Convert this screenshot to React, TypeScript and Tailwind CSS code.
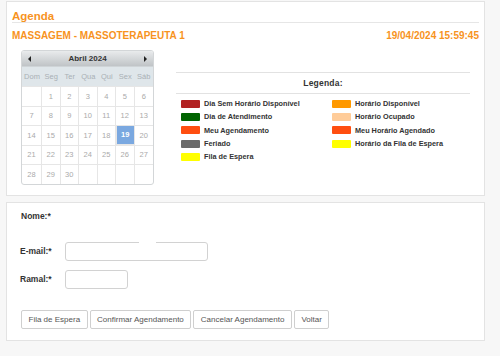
import React from "react";

const font = { fontFamily: '"Liberation Sans", Arial, sans-serif' };

const days = ["Dom", "Seg", "Ter", "Qua", "Qui", "Sex", "Sáb"];
const weeks: (number | null)[][] = [
  [null, 1, 2, 3, 4, 5, 6],
  [7, 8, 9, 10, 11, 12, 13],
  [14, 15, 16, 17, 18, 19, 20],
  [21, 22, 23, 24, 25, 26, 27],
  [28, 29, 30, null, null, null, null],
];
const rowH = ["h-[20px]", "h-[19px]", "h-[20px]", "h-[19px]", "h-[20px]"];

const legendLeft = [
  { c: "bg-[#b22222]", t: "Dia Sem Horário Disponível" },
  { c: "bg-[#006400]", t: "Dia de Atendimento" },
  { c: "bg-[#ff4e10]", t: "Meu Agendamento" },
  { c: "bg-[#6a6a6a]", t: "Feriado" },
  { c: "bg-[#ffff00]", t: "Fila de Espera" },
];
const legendRight = [
  { c: "bg-[#ff9900]", t: "Horário Disponível" },
  { c: "bg-[#ffcc99]", t: "Horário Ocupado" },
  { c: "bg-[#ff4e10]", t: "Meu Horário Agendado" },
  { c: "bg-[#ffff00]", t: "Horário da Fila de Espera" },
];

function Calendar() {
  return (
    <div className="w-[133px] border border-[#d3d6d8] rounded-[3px] overflow-hidden bg-white">
      <div className="h-[15px] flex items-center justify-between px-[6px] bg-gradient-to-b from-[#e9ebec] to-[#c0c4c7]">
        <span className="w-0 h-0 border-y-[3px] border-y-transparent border-r-[3px] border-r-[#222]" />
        <span className="text-[8px] font-bold text-[#333] leading-none">Abril 2024</span>
        <span className="w-0 h-0 border-y-[3px] border-y-transparent border-l-[3px] border-l-[#222]" />
      </div>
      <div className="grid grid-cols-[20px_repeat(6,1fr)] h-[20px] bg-[#dfe6ea] border-t border-[#cfd4d7]">
        {days.map((d) => (
          <div key={d} className="flex items-center justify-center text-[7.5px] text-[#a9b0b5]">
            {d}
          </div>
        ))}
      </div>
      {weeks.map((w, i) => (
        <div key={i} className={`grid grid-cols-[20px_repeat(6,1fr)] ${rowH[i]}`}>
          {w.map((d, j) => (
            <div
              key={j}
              className={`flex items-center justify-center text-[7.5px] border-t border-[#e6e6e6] ${
                j < 6 ? "border-r" : ""
              } ${d === 19 ? "bg-[#7aa8e0] text-white font-bold border border-[#5b8fcf]" : "text-[#aaaaaa]"}`}
            >
              {d ?? ""}
            </div>
          ))}
        </div>
      ))}
    </div>
  );
}

function LegendItem({ c, t }: { c: string; t: string }) {
  return (
    <div className="h-[13.3px] flex items-center">
      <span className={`w-[19px] h-[8px] rounded-[1px] ${c}`} />
      <span className="ml-[4px] text-[7.3px] font-bold text-[#333] leading-none">{t}</span>
    </div>
  );
}

function Btn({ children }: { children: React.ReactNode }) {
  return (
    <button className="h-[19px] px-[6.5px] border border-[#cfcfcf] rounded-[2px] bg-white text-[8px] text-[#555] leading-none">
      {children}
    </button>
  );
}

export default function App() {
  return (
    <div style={font} className="w-[500px] h-[356px] bg-[#f7f7f7] pl-[6px] pr-[15px] pt-[1px]">
      {/* Panel 1 */}
      <div className="h-[195px] bg-white border border-[#e3e3e3] px-[5px] pt-[9px]">
        <div className="text-[11.5px] leading-[11px] font-bold text-[#f7931e] border-b border-[#e6e6e6] h-[12px]">
          Agenda
        </div>
        <div className="mt-[7px] flex justify-between items-baseline text-[10px] leading-[12px] font-bold text-[#f7931e]">
          <span>MASSAGEM - MASSOTERAPEUTA 1</span>
          <span>19/04/2024 15:59:45</span>
        </div>
        <div className="mt-[8px] flex">
          <div className="ml-[9px]">
            <Calendar />
          </div>
          <div className="ml-[22px] mt-[22px] w-[294px]">
            <div className="border-t border-b border-[#e2e2e2] h-[22px] flex items-center justify-center text-[8.5px] font-bold text-[#333] tracking-[0.2px]">
              Legenda:
            </div>
            <div className="pt-[3px] pl-[5px] grid grid-cols-[151px_1fr]">
              <div>
                {legendLeft.map((l) => (
                  <LegendItem key={l.t} {...l} />
                ))}
              </div>
              <div>
                {legendRight.map((l) => (
                  <LegendItem key={l.t} {...l} />
                ))}
              </div>
            </div>
          </div>
        </div>
      </div>

      {/* Panel 2 */}
      <div className="mt-[6px] h-[139px] bg-white border border-[#e3e3e3] pl-[14px] pt-[7px]">
        <div className="h-[12px] flex items-center text-[8.5px] font-bold text-[#333]">Nome:*</div>
        <div className="mt-[20px] flex items-center h-[19px]">
          <span className="w-[45px] text-[8.5px] font-bold text-[#333] -ml-[1px]">E-mail:*</span>
          <div className="relative">
            <div className="w-[143px] h-[19px] border border-[#d2d2d2] rounded-[3px] bg-white" />
            <span className="absolute top-0 left-[74px] w-[17px] h-[2px] bg-white" />
          </div>
        </div>
        <div className="mt-[9px] flex items-center h-[19px]">
          <span className="w-[45px] text-[8.5px] font-bold text-[#333] -ml-[1px]">Ramal:*</span>
          <div className="w-[63px] h-[19px] border border-[#d2d2d2] rounded-[3px] bg-white" />
        </div>
        <div className="mt-[21px] flex gap-[2px]">
          <Btn>Fila de Espera</Btn>
          <Btn>Confirmar Agendamento</Btn>
          <Btn>Cancelar Agendamento</Btn>
          <Btn>Voltar</Btn>
        </div>
      </div>
    </div>
  );
}
